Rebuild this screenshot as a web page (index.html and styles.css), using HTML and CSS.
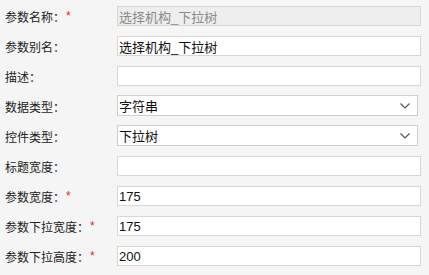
FILE: index.html
```html
<!DOCTYPE html>
<html lang="zh-CN">
<head>
    <meta charset="UTF-8">
    <meta name="viewport" content="width=device-width, initial-scale=1.0">
    <title>参数设置</title>
    <link rel="stylesheet" href="styles.css">
</head>
<body>

<div class="param-form">
    <label class="field-label">参数名称：<span class="req">*</span></label>
    <input class="field-input" type="text" value="选择机构_下拉树" disabled>

    <label class="field-label">参数别名：</label>
    <input class="field-input" type="text" value="选择机构_下拉树">

    <label class="field-label">描述：</label>
    <input class="field-input" type="text" value="">

    <label class="field-label">数据类型：</label>
    <div class="field-select">
        <span>字符串</span>
        <svg class="chevron" width="10" height="6" viewBox="0 0 10 6"><path d="M0.5 0.5 L5 5 L9.5 0.5" fill="none" stroke="#555" stroke-width="1.2"/></svg>
    </div>

    <label class="field-label">控件类型：</label>
    <div class="field-select">
        <span>下拉树</span>
        <svg class="chevron" width="10" height="6" viewBox="0 0 10 6"><path d="M0.5 0.5 L5 5 L9.5 0.5" fill="none" stroke="#555" stroke-width="1.2"/></svg>
    </div>

    <label class="field-label">标题宽度：</label>
    <input class="field-input" type="text" value="">

    <label class="field-label">参数宽度：<span class="req">*</span></label>
    <input class="field-input" type="text" value="175">

    <label class="field-label">参数下拉宽度：<span class="req">*</span></label>
    <input class="field-input" type="text" value="175">

    <label class="field-label">参数下拉高度：<span class="req">*</span></label>
    <input class="field-input" type="text" value="200">
</div>

</body>
</html>
```

FILE: styles.css
```css
body {
    margin: 0;
    background-color: #f5f5f5;
    font-family: Arial, "Liberation Sans", "Noto Sans CJK SC", sans-serif;
    color: #222;
}
.param-form {
    display: grid;
    grid-template-columns: 112px 304px;
    grid-auto-rows: 20px;
    row-gap: 10px;
    padding: 6px 0 0 5px;
}
.field-label {
    display: flex;
    align-items: center;
    font-size: 12px;
    color: #222;
    white-space: nowrap;
}
.req {
    color: #e4262b;
    margin-left: 1px;
}
.field-input {
    box-sizing: border-box;
    width: 304px;
    height: 20px;
    margin: 0;
    padding: 0 1px;
    border: 1px solid #d9d7d0;
    background: #fff;
    font-family: Arial, "Liberation Sans", "Noto Sans CJK SC", sans-serif;
    font-size: 13px;
    color: #111;
    outline: none;
}
.field-input:disabled {
    background: #eeeeee;
    color: #8a8a8a;
}
.field-select {
    box-sizing: border-box;
    width: 301px;
    height: 21px;
    margin-top: -1px;
    padding: 0 7px 0 1px;
    border: 1px solid #cfcfcf;
    background: #fff;
    display: flex;
    align-items: center;
    justify-content: space-between;
    font-size: 13px;
    color: #111;
}
.chevron {
    display: block;
}
```
